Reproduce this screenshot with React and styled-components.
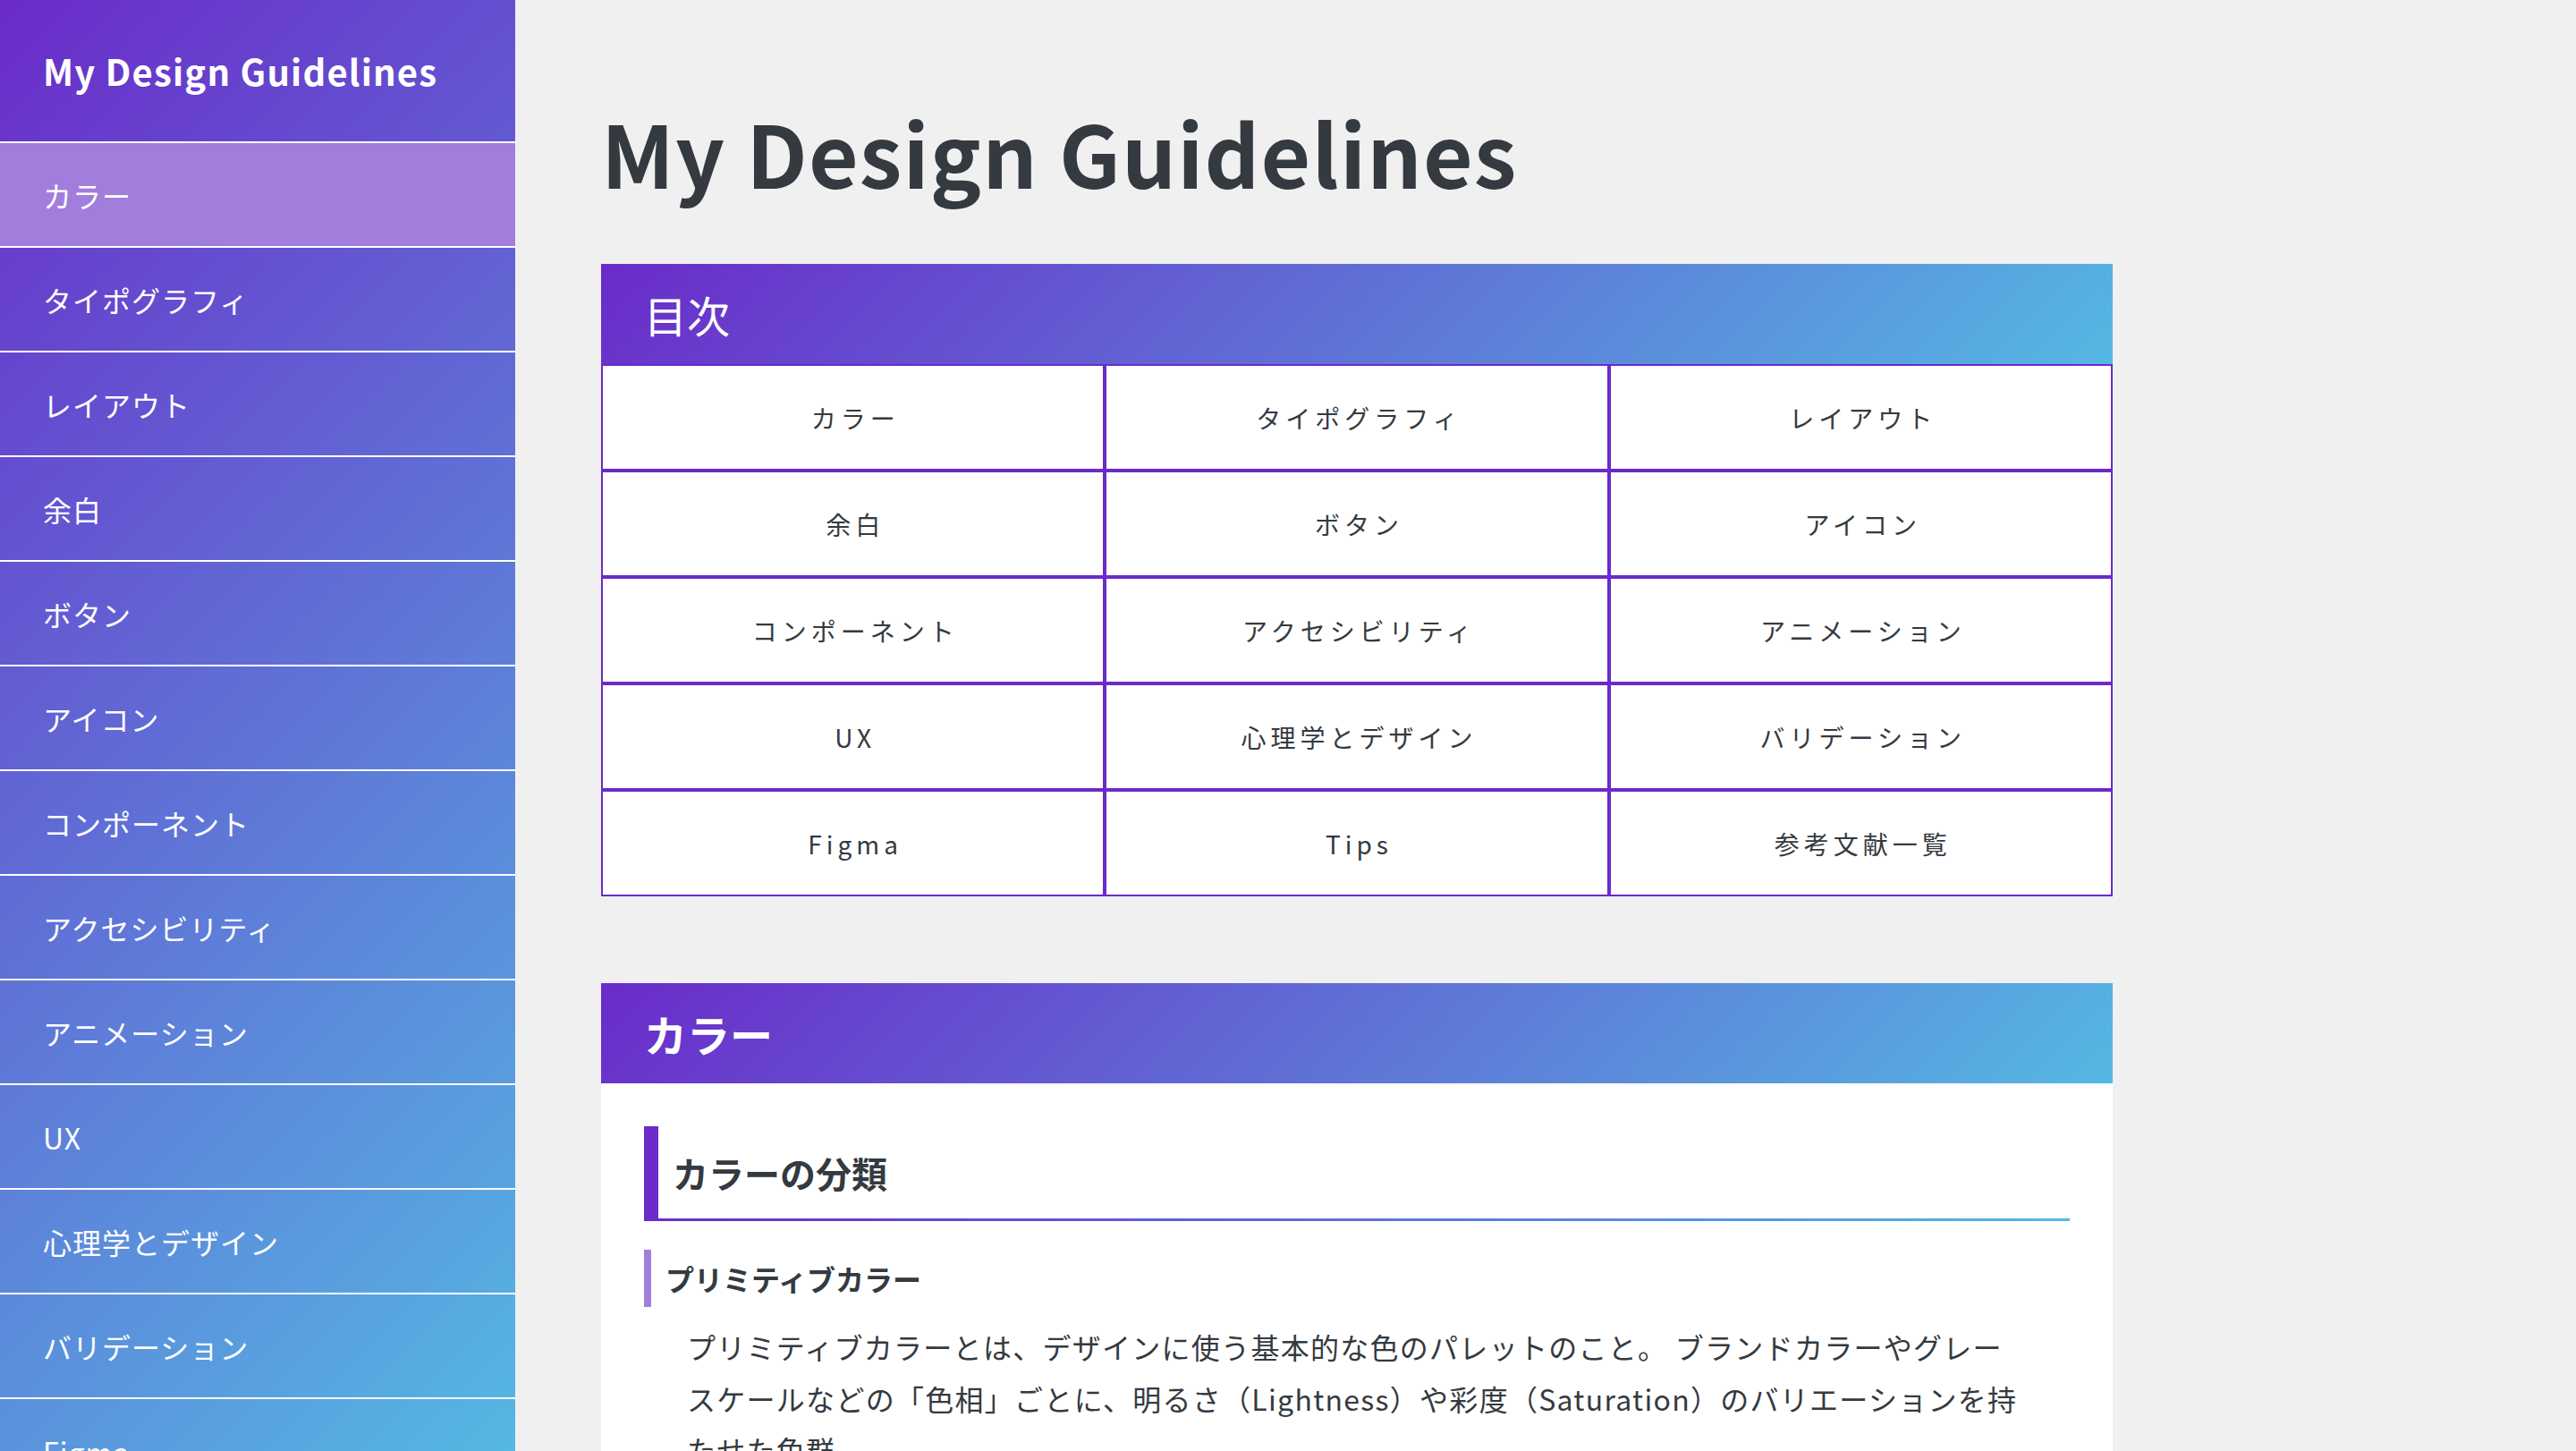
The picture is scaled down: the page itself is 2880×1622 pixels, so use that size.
import React from 'react';
import styled, { createGlobalStyle } from 'styled-components';

const PURPLE = '#6a2bc9';
const LAVENDER = '#a27edc';
const SKY = '#55b8e3';
const INK = '#343a40';
const BRAND_GRADIENT = `linear-gradient(135deg, ${PURPLE} 0%, ${SKY} 100%)`;

const menu = [
  'カラー',
  'タイポグラフィ',
  'レイアウト',
  '余白',
  'ボタン',
  'アイコン',
  'コンポーネント',
  'アクセシビリティ',
  'アニメーション',
  'UX',
  '心理学とデザイン',
  'バリデーション',
  'Figma',
  'Tips',
  '参考文献一覧',
];

const App = () => {
  const active = 'カラー';

  return (
    <>
      <GlobalStyle />
      <Layout>
        <Sidebar>
          <SiteTitle>My Design Guidelines</SiteTitle>
          {menu.map((label) => (
            <NavItem key={label} href="#" $active={label === active}>
              {label}
            </NavItem>
          ))}
        </Sidebar>

        <Main>
          <PageTitle>My Design Guidelines</PageTitle>

          <Section>
            <SectionTitle $bold={false}>目次</SectionTitle>
            <TocGrid>
              {menu.map((label) => (
                <TocLink key={label} href="#">
                  {label}
                </TocLink>
              ))}
            </TocGrid>
          </Section>

          <Section>
            <SectionTitle $bold>カラー</SectionTitle>
            <SectionBody>
              <Heading3>カラーの分類</Heading3>
              <Heading4>プリミティブカラー</Heading4>
              <Paragraph>
                プリミティブカラーとは、デザインに使う基本的な色のパレットのこと。
                ブランドカラーやグレースケールなどの「色相」ごとに、明るさ（Lightness）や彩度（Saturation）のバリエーションを持たせた色群。
              </Paragraph>
            </SectionBody>
          </Section>
        </Main>
      </Layout>
    </>
  );
};

const GlobalStyle = createGlobalStyle`
  * {
    box-sizing: border-box;
  }

  html,
  body {
    margin: 0;
    padding: 0;
  }

  body {
    font-family: "Noto Sans CJK JP", "Noto Sans", sans-serif;
    color: ${INK};
    background-color: #f0f0f0;
  }
`;

const Layout = styled.div`
  display: flex;
  height: 100vh;
  overflow: hidden;
`;

const Sidebar = styled.nav`
  flex: 0 0 576px;
  height: 100%;
  display: flex;
  flex-direction: column;
  overflow: hidden;
  background: ${BRAND_GRADIENT};
  color: #fff;
`;

const SiteTitle = styled.div`
  flex: 0 0 160px;
  display: flex;
  align-items: center;
  padding: 0 48px;
  border-bottom: 2px solid #fff;
  font-size: 40px;
  font-weight: 700;
  letter-spacing: 0.03em;
`;

const NavItem = styled.a`
  flex: 0 0 117px;
  display: flex;
  align-items: center;
  padding: 0 48px;
  border-bottom: 2px solid #fff;
  background-color: ${(props) => (props.$active ? LAVENDER : 'transparent')};
  color: #fff;
  font-size: 32px;
  letter-spacing: 1px;
  text-decoration: none;
`;

const Main = styled.main`
  flex: 1;
  height: 100%;
  overflow: hidden;
  padding: 112px 96px 96px;
`;

const PageTitle = styled.h1`
  margin: 0 0 68px;
  font-size: 96px;
  line-height: 1.2;
  font-weight: 700;
  letter-spacing: 0.012em;
  color: ${INK};
`;

const Section = styled.section`
  max-width: 1690px;
  margin-bottom: 97px;
`;

const SectionTitle = styled.h2`
  height: 112px;
  margin: 0;
  padding: 0 48px;
  display: flex;
  align-items: center;
  background: ${BRAND_GRADIENT};
  color: #fff;
  font-size: 48px;
  font-weight: ${(props) => (props.$bold ? 700 : 400)};
`;

const TocGrid = styled.div`
  display: grid;
  grid-template-columns: repeat(3, 1fr);
`;

const TocLink = styled.a`
  height: 119px;
  display: flex;
  align-items: center;
  justify-content: center;
  padding-left: 5px;
  border: 2px solid ${PURPLE};
  background-color: #fff;
  color: ${INK};
  font-size: 28px;
  letter-spacing: 5px;
  text-decoration: none;
`;

const SectionBody = styled.div`
  padding: 48px 48px 64px;
  background-color: #fff;
`;

const Heading3 = styled.h3`
  margin: 0;
  padding: 22px 0 24px 16px;
  border-left: 16px solid ${PURPLE};
  background: linear-gradient(90deg, ${PURPLE}, ${SKY}) left bottom / 100% 3px
    no-repeat;
  background-origin: border-box;
  font-size: 40px;
  line-height: 60px;
  font-weight: 700;
`;

const Heading4 = styled.h4`
  margin: 32px 0 0;
  padding: 8px 0 8px 16px;
  border-left: 8px solid ${LAVENDER};
  font-size: 32px;
  line-height: 48px;
  font-weight: 700;
`;

const Paragraph = styled.p`
  margin: 16px 0 0;
  padding: 0 47px 0 48px;
  font-size: 32px;
  line-height: 1.8;
  letter-spacing: 0.04em;
`;

export default App;
